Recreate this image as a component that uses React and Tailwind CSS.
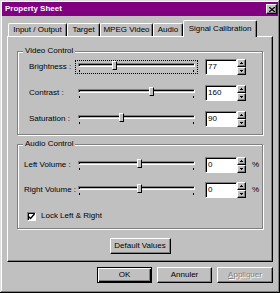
import React from "react";

const raised = "border border-t-white border-l-white border-r-black border-b-black shadow-[inset_-1px_-1px_#808080]";
const sunken = "border border-t-[#808080] border-l-[#808080] border-r-white border-b-white shadow-[inset_1px_1px_#000]";
const etched = "border border-[#808080] shadow-[inset_1px_1px_#fff,1px_1px_#fff]";

function Arrow({ up }) {
  return (
    <svg width="3" height="2" viewBox="0 0 3 2">
      <path d={up ? "M1 0h1v1h1v1H0V1h1z" : "M0 0h3v1H2v1H1V1H0z"} fill="#000" />
    </svg>
  );
}

function Spin({ value }) {
  return (
    <div className="flex">
      <div className={`w-[32px] h-[16px] bg-white ${sunken} pl-[2px] flex items-center`}>{value}</div>
      <div className="flex flex-col w-[9px] h-[16px]">
        <div className={`flex-1 bg-[#c0c0c0] ${raised} flex items-center justify-center`}><Arrow up /></div>
        <div className={`flex-1 bg-[#c0c0c0] ${raised} flex items-center justify-center`}><Arrow /></div>
      </div>
    </div>
  );
}

function Slider({ pos, focused }) {
  return (
    <div className={`relative w-[121px] h-[12px] ${focused ? "outline outline-1 outline-dotted outline-black" : ""}`}>
      <div className="mx-[2px] mt-[2px] h-[4px] border border-t-[#808080] border-l-[#808080] border-r-white border-b-white shadow-[inset_1px_1px_#000] bg-[#c0c0c0]" />
      <div className="flex justify-between px-[3px] mt-[3px]">
        <div className="w-px h-[2px] bg-black" />
        <div className="w-px h-[2px] bg-black" />
      </div>
      <div className="absolute top-0 w-[5px] h-[9px] bg-[#c0c0c0] border border-t-white border-l-white border-r-black border-b-black" style={{ left: pos }} />
    </div>
  );
}

function Row({ label, labelW, pos, value, focused, pct }) {
  return (
    <div className="flex items-center h-[16px]">
      <div className="shrink-0 whitespace-nowrap" style={{ width: labelW }}>{label}</div>
      <Slider pos={pos} focused={focused} />
      <div className="ml-[8px]"><Spin value={value} /></div>
      {pct && <div className="ml-[6px]">%</div>}
    </div>
  );
}

function Group({ title, className, children }) {
  return (
    <div className={`relative ${etched} ${className}`}>
      <div className="absolute -top-[6px] left-[5px] px-[2px] bg-[#c0c0c0] leading-[10px]">{title}</div>
      {children}
    </div>
  );
}

function Button({ children, def, disabled, className = "" }) {
  const border = def
    ? "border border-black shadow-[inset_1px_1px_#fff,inset_-1px_-1px_#000,inset_-2px_-2px_#808080]"
    : raised;
  return (
    <div className={`h-[16px] bg-[#c0c0c0] ${border} flex items-center justify-center whitespace-nowrap ${disabled ? "text-[#808080] [text-shadow:1px_1px_#fff]" : ""} ${className}`}>
      {children}
    </div>
  );
}

const tabs = [
  { name: "Input / Output", w: 59 },
  { name: "Target", w: 33 },
  { name: "MPEG Video", w: 53 },
  { name: "Audio", w: 30 },
];

export default function App() {
  return (
    <div className="w-[280px] h-[293px] bg-[#c0c0c0] p-[2px] flex flex-col font-['Liberation_Sans',Arial,sans-serif] text-[8px] text-black shadow-[inset_-1px_-1px_#000,inset_1px_1px_#dfdfdf,inset_-2px_-2px_#808080,inset_2px_2px_#fff]">
      {/* title bar */}
      <div className="h-[14px] bg-[#800080] flex items-center justify-between pl-[3px] pr-[1px]">
        <span className="text-white font-bold">Property Sheet</span>
        <div className={`w-[11px] h-[10px] bg-[#c0c0c0] ${raised} flex items-center justify-center`}>
          <svg width="6" height="5" viewBox="0 0 6 5">
            <path d="M0 0l6 5M6 0L0 5" stroke="#000" strokeWidth="1.3" />
          </svg>
        </div>
      </div>

      {/* tabs */}
      <div className="mt-[4px] mx-[5px] h-[16px] flex items-end pl-[1px] relative z-10">
        {tabs.map((t) => (
          <div
            key={t.name}
            className="h-[13px] whitespace-nowrap border-t border-l border-t-white border-l-white border-r border-r-black shadow-[inset_-1px_0_#808080] rounded-t-[2px] flex items-center justify-center"
            style={{ width: t.w }}
          >
            {t.name}
          </div>
        ))}
        <div className="w-[74px] h-[17px] -mb-[1px] whitespace-nowrap bg-[#c0c0c0] border-t border-l border-t-white border-l-white border-r border-r-black shadow-[inset_-1px_0_#808080] rounded-t-[2px] flex items-center justify-center pb-[1px]">
          Signal Calibration
        </div>
      </div>

      {/* panel */}
      <div className={`mx-[5px] h-[226px] ${raised} pt-[14px] px-[9px] flex flex-col`}>
        <Group title="Video Control" className="h-[84px] pt-[7px] pl-[11px] flex flex-col gap-[10px]">
          <Row label="Brightness :" labelW={47} pos={36} value="77" focused />
          <Row label="Contrast :" labelW={47} pos={73} value="160" />
          <Row label="Saturation :" labelW={47} pos={43} value="90" />
        </Group>

        <Group title="Audio Control" className="mt-[9px] h-[85px] pt-[12px] pl-[6px] flex flex-col">
          <div className="flex flex-col gap-[9px]">
            <Row label="Left Volume :" labelW={52} pos={61} value="0" pct />
            <Row label="Right Volume :" labelW={52} pos={61} value="0" pct />
          </div>
          <div className="mt-[12px] ml-[3px] flex items-center gap-[5px]">
            <div className={`w-[9px] h-[9px] bg-white ${sunken} flex items-center justify-center`}>
              <svg width="7" height="7" viewBox="0 0 7 7">
                <path d="M0.5 3.5l2 2 4-4.5" stroke="#000" strokeWidth="1.4" fill="none" />
              </svg>
            </div>
            <span>Lock Left &amp; Right</span>
          </div>
        </Group>

        <div className="mt-[9px] flex justify-center">
          <Button className="w-[61px]">Default Values</Button>
        </div>
      </div>

      {/* bottom buttons */}
      <div className="mt-[5px] mr-[5px] flex justify-end gap-[5px]">
        <Button def className="w-[55px]">OK</Button>
        <Button className="w-[55px]">Annuler</Button>
        <Button disabled className="w-[56px]"><span><span className="underline">A</span>ppliquer</span></Button>
      </div>
    </div>
  );
}
